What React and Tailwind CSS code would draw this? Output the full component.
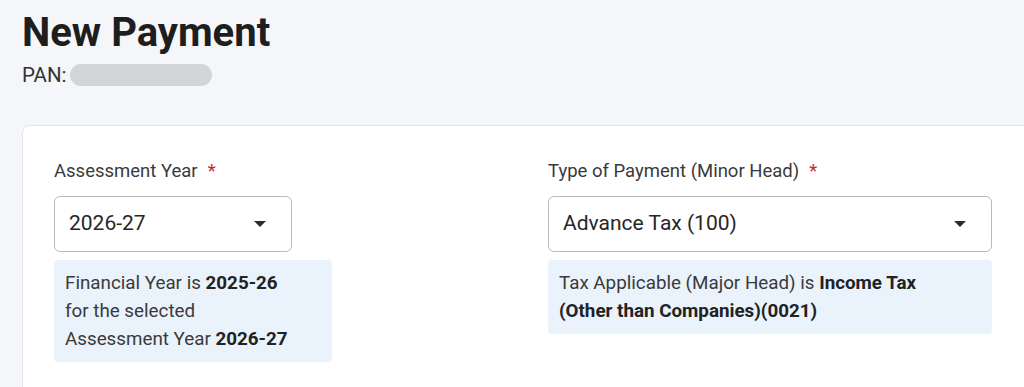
import React from 'react';

// Dropdown caret, small filled triangle
const Caret = () => (
  <svg width="12" height="6" viewBox="0 0 12 6" className="shrink-0">
    <path d="M0 0 L12 0 L6 6 Z" fill="#2b2b2b" />
  </svg>
);

const FieldLabel = ({ children }) => (
  <div className="text-[18.5px] leading-[20px] text-[#3a3a3a] h-[20px]">
    {children}
    <span className="ml-[10px] text-[#c8283a]">*</span>
  </div>
);

const SelectBox = ({ value, width }) => (
  <div
    className={`mt-[15px] h-[56px] ${width} flex items-center justify-between pl-[14px] pr-[25px] bg-white border border-[#b9b9b9] rounded-[6px]`}
  >
    <span className="text-[21px] text-[#262626]">{value}</span>
    <Caret />
  </div>
);

export default function App() {
  return (
    <div
      className="w-full h-[387px] overflow-hidden bg-[#f5f6fa]"
      style={{ fontFamily: 'Roboto, "Liberation Sans", sans-serif' }}
    >
      <div className="pl-[22px] pt-[11px]">
        <h1 className="text-[40px] leading-[44px] font-bold text-[#1e1e1e]">New Payment</h1>
        <div className="mt-[9px] flex items-center h-[22px]">
          <span className="text-[20.5px] text-[#333]">PAN:</span>
          <span className="ml-[3px] h-[22px] w-[142px] rounded-full bg-[#d3d4d6]" />
        </div>

        <div className="mt-[39px] w-[1040px] h-[300px] bg-white border border-[#e3e4e8] rounded-[8px] pl-[31px] pt-[35px]">
          <div className="flex">
            <div className="w-[494px]">
              <FieldLabel>Assessment Year</FieldLabel>
              <SelectBox value="2026-27" width="w-[238px]" />
              <div className="mt-[8px] w-[278px] rounded-[4px] bg-[#eaf2fc] px-[11px] py-[9px] text-[18.8px] leading-[28px] text-[#3a3a3a]">
                Financial Year is <b className="font-bold text-[#222]">2025-26</b>
                <br />
                for the selected
                <br />
                Assessment Year <b className="font-bold text-[#222]">2026-27</b>
              </div>
            </div>
            <div className="w-[444px]">
              <FieldLabel>Type of Payment (Minor Head)</FieldLabel>
              <SelectBox value="Advance Tax (100)" width="w-[444px]" />
              <div className="mt-[8px] w-[444px] rounded-[4px] bg-[#eaf2fc] pl-[11px] pr-[40px] py-[9px] text-[18.8px] leading-[28px] text-[#3a3a3a]">
                Tax Applicable (Major Head) is{' '}
                <b className="font-bold text-[#222]">Income Tax (Other than Companies)(0021)</b>
              </div>
            </div>
          </div>
        </div>
      </div>
    </div>
  );
}
